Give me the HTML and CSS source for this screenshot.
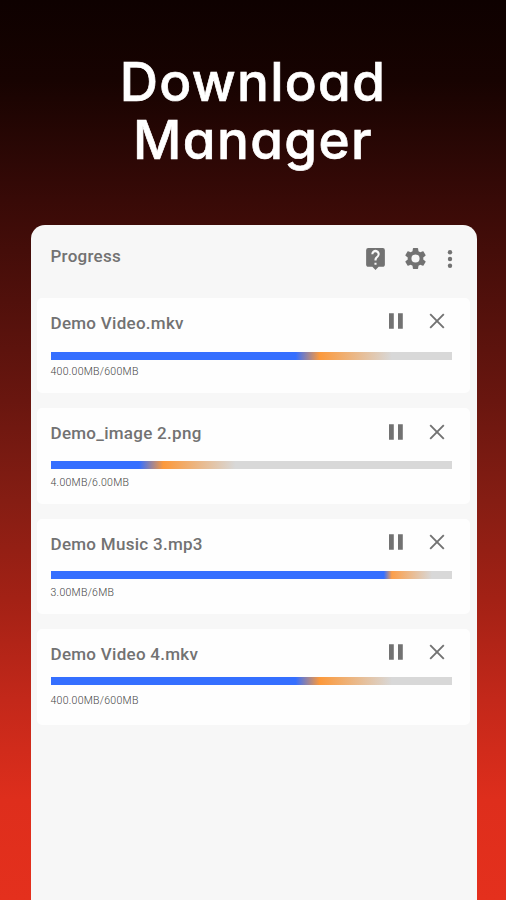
FILE: index.html
```html
<!DOCTYPE html>
<html lang="en">
<head>
<meta charset="utf-8">
<title>Download Manager</title>
<link rel="stylesheet" href="styles.css">
</head>
<body>
<svg class="defs" width="0" height="0" aria-hidden="true">
  <symbol id="pause" viewBox="0 0 16 16"><path d="M1 .3h4.8v15.4H1zM10 .3h4.8v15.4H10z" fill="currentColor"/></symbol>
  <symbol id="close" viewBox="0 0 16 16"><path d="M1.2 1.2l13.6 13.6M14.8 1.2L1.2 14.8" fill="none" stroke="currentColor" stroke-width="1.900"/></symbol>
</svg>
<h1 class="title"><span class="line first">Download</span><span class="line second">Manager</span></h1>
<main class="panel">
  <header class="bar">
    <h2 class="heading">Progress</h2>
    <svg class="icon help" viewBox="0 0 24 24"><path fill="currentColor" d="M19 2H5a2 2 0 0 0-2 2v14c0 1.1.9 2 2 2h4l3 3 3-3h4c1.1 0 2-.9 2-2V4a2 2 0 0 0-2-2zm-6 16h-2v-2h2v2zm2.070-7.750l-.9.920C13.450 11.900 13 12.500 13 14h-2v-.5c0-1.100.45-2.100 1.170-2.830l1.240-1.260A2 2 0 1 0 10 8H8a4 4 0 1 1 7.070 2.250z"/></svg>
    <svg class="icon gear" viewBox="0 0 24 24"><path fill="currentColor" d="M19.430 12.980c.04-.32.07-.64.07-.98s-.03-.66-.07-.98l2.110-1.650c.19-.15.24-.42.12-.64l-2-3.460c-.12-.22-.39-.3-.61-.22l-2.490 1c-.52-.4-1.080-.73-1.690-.98l-.38-2.650A.49.49 0 0 0 14 2h-4c-.25 0-.46.18-.49.42l-.38 2.650c-.61.25-1.170.59-1.690.98l-2.490-1c-.23-.09-.49 0-.61.22l-2 3.460c-.13.22-.07.49.12.64l2.110 1.650c-.04.32-.07.65-.07.98s.03.66.07.98l-2.110 1.650c-.19.15-.24.42-.12.64l2 3.460c.12.22.39.3.61.22l2.490-1c.52.4 1.080.73 1.690.98l.38 2.650c.03.24.24.42.49.42h4c.25 0 .46-.18.49-.42l.38-2.650c.61-.25 1.170-.59 1.690-.98l2.490 1c.23.09.49 0 .61-.22l2-3.460c.12-.22.07-.49-.12-.64l-2.110-1.650zM12 15.900a3.900 3.900 0 1 1 0-7.800 3.900 3.900 0 0 1 0 7.800z"/></svg>
    <svg class="icon more" viewBox="0 0 6 20"><g fill="currentColor"><circle cx="3" cy="3.200" r="2.200"/><circle cx="3" cy="10" r="2.200"/><circle cx="3" cy="16.800" r="2.200"/></g></svg>
  </header>
  <section class="list">
    <article class="card">
      <div class="row"><h3 class="name">Demo Video.mkv</h3><svg class="act"><use href="#pause"/></svg><svg class="act"><use href="#close"/></svg></div>
      <div class="track video"></div>
      <p class="size">400.00MB/600MB</p>
    </article>
    <article class="card second-item">
      <div class="row"><h3 class="name">Demo_image 2.png</h3><svg class="act"><use href="#pause"/></svg><svg class="act"><use href="#close"/></svg></div>
      <div class="track image"></div>
      <p class="size">4.00MB/6.00MB</p>
    </article>
    <article class="card third-item">
      <div class="row"><h3 class="name">Demo Music 3.mp3</h3><svg class="act"><use href="#pause"/></svg><svg class="act"><use href="#close"/></svg></div>
      <div class="track music"></div>
      <p class="size">3.00MB/6MB</p>
    </article>
    <article class="card fourth-item">
      <div class="row"><h3 class="name">Demo Video 4.mkv</h3><svg class="act"><use href="#pause"/></svg><svg class="act"><use href="#close"/></svg></div>
      <div class="track video"></div>
      <p class="size">400.00MB/600MB</p>
    </article>
  </section>
</main>
</body>
</html>
```
FILE: styles.css
```css
* { box-sizing: border-box; }
html { height: 100%; }
body {
  margin: 0;
  height: 900px;
  overflow: hidden;
  display: flex;
  flex-direction: column;
  background: linear-gradient(#0e0100 0, #170301 80px, #380a07 200px, #69160f 400px, #851d13 500px, #a32115 600px, #c3281a 700px, #de2e1c 800px, #e4301d 900px);
  font-family: Roboto, "Liberation Sans", sans-serif;
}
h1, h2, h3, p { margin: 0; }
.defs { position: absolute; }
.title {
  height: 225px;
  flex: none;
  padding-top: 53px;
  color: #fff;
  font: 500 53px/58px Inter, "Liberation Sans", sans-serif;
  font-feature-settings: "cv11";
  -webkit-text-stroke: .7px #fff;
  text-align: center;
}
.line { display: block; }
.first { letter-spacing: 1.300px; }
.second { letter-spacing: 1.400px; }
.panel {
  flex: 1;
  width: 446px;
  margin-left: 31px;
  padding: 0 7px 0 6px;
  border-radius: 14px 14px 0 0;
  background: #f7f7f7;
  color: #727272;
}
.bar {
  height: 73px;
  padding: 0 17px 6px 13.500px;
  display: flex;
  align-items: center;
}
.heading { flex: 1; font-size: 17px; font-weight: 500; line-height: 20px; padding-bottom: 5px; letter-spacing: .25px; }
.icon { width: 25px; height: 25px; }
.gear { margin-left: 15px; }
.more { width: 6px; height: 20px; margin-left: 19px; }
.list { display: grid; gap: 15px; }
.card {
  height: 95.400px;
  padding: 13.300px 18px 0 13.500px;
  border-radius: 5px;
  background: #fefefe;
}
.row { height: 20px; display: flex; align-items: center; }
.name { flex: 1; font-size: 17px; font-weight: 500; line-height: 22px; padding-top: 3px; letter-spacing: .28px; }
.act { width: 16px; height: 16px; margin-right: 7.500px; }
.act:nth-of-type(1) { margin-right: 24.500px; }
.track { height: 8px; margin-top: 20.300px; background: #d9d9d9; }
.video { background: linear-gradient(90deg, #356fff 61%, #fc993b 67%, #d8d8d8 85%); }
.image { background: linear-gradient(90deg, #356fff 22%, #fc993b 28%, #d8d8d8 46%); }
.music { background: linear-gradient(90deg, #356fff 83%, #fc9f4a 85%, #d8d8d8 95%); }
.second-item .track { margin-top: 19.500px; }
.third-item .track { margin-top: 18.500px; }
.fourth-item .track { margin-top: 15px; }
.size { margin-top: 6px; color: #444; font-size: 10.500px; font-weight: 300; line-height: 12px; letter-spacing: .27px; }
.second-item .size { margin-top: 8px; }
.third-item .size { margin-top: 8px; }
.fourth-item .size { margin-top: 10px; }
```
